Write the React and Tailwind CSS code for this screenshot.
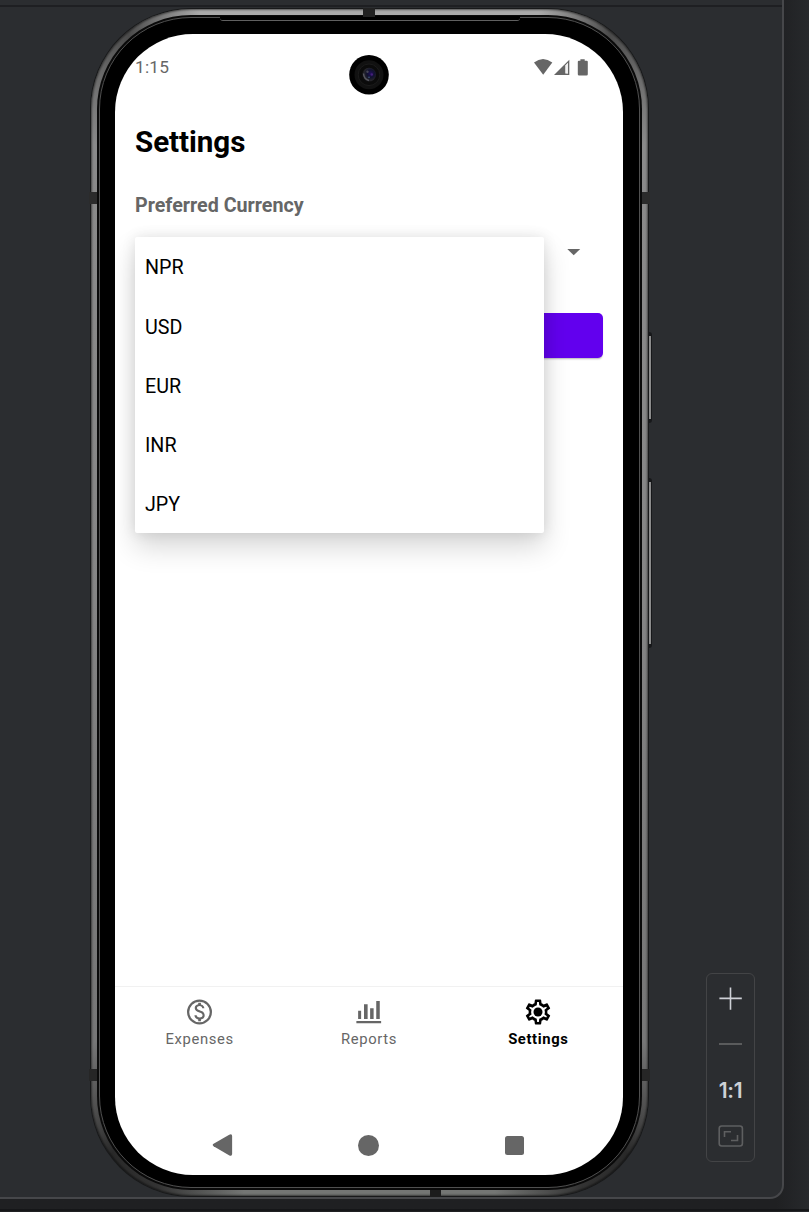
const currencies = ["NPR", "USD", "EUR", "INR", "JPY"];

function StatusIcons() {
  return (
    <svg width="56" height="18" viewBox="534 59 56 18" fill="#666">
      <path d="M534 62.6Q543 55.6 552.3 62.6L543.2 74.7Z" />
      <path d="M569.3 59.8V75H554Z" />
      <path d="M565.3 65.5L568 62.8V73.5H565.3Z" fill="#fff" />
      <path d="M566.5 64.3h1.2v9.2h-1.2z" fill="#e4e4e4" />
      <path d="M580.4 59.2h4.3v1.5h2q1.1 0 1.1 1.1v12.4q0 1.3-1.3 1.3h-7.4q-1.3 0-1.3-1.3v-12.4q0-1.1 1.1-1.1h1.5z" />
    </svg>
  );
}

function Camera() {
  return (
    <svg width="40" height="40" viewBox="0 0 40 40">
      <defs>
        <radialGradient id="lens" cx="0.62" cy="0.42" r="0.6">
          <stop offset="0" stopColor="#21105c" />
          <stop offset="0.45" stopColor="#11122e" />
          <stop offset="0.8" stopColor="#26262b" />
          <stop offset="1" stopColor="#101012" />
        </radialGradient>
      </defs>
      <circle cx="20" cy="19.8" r="19.8" fill="#000" />
      <circle cx="20" cy="19.8" r="14.5" fill="#111" />
      <circle cx="20" cy="19.8" r="10.8" fill="#0b0b0b" stroke="#1b1b1b" />
      <circle cx="20" cy="19.8" r="7" fill="url(#lens)" />
      <path d="M14.5 18.5Q15 24.5 20 25.5" fill="none" stroke="#56565e" strokeWidth="1.5" />
      <circle cx="18.5" cy="16.8" r="1.2" fill="#454555" />
      <circle cx="22.8" cy="19.5" r="1.2" fill="#46207c" />
      <circle cx="20" cy="22.3" r="0.8" fill="#3f5d83" />
    </svg>
  );
}

function Tab({ label, active, children }) {
  return (
    <div className={"flex flex-1 flex-col items-center pt-[10px] " + (active ? "font-bold text-black" : "text-[#666]")}>
      <svg width="30" height="30" viewBox="0 0 24 24" fill="currentColor">
        {children}
      </svg>
      <span className="mt-[2px] text-[14.8px] leading-[20px] tracking-[0.62px]">{label}</span>
    </div>
  );
}

function Phone() {
  return (
    <div className="relative ml-[90px] mt-px h-[1189px] w-[559px] shrink-0">
      <div className="absolute left-[556px] top-[324px] h-[91px] w-[6px] rounded-r-[3px] border-y-[4px] border-r border-[#17181a] bg-[#8c8c8c]" />
      <div className="absolute left-[556px] top-[470px] h-[170px] w-[6px] rounded-r-[3px] border-y-[4px] border-r border-[#17181a] bg-[#8c8c8c]" />
      <div className="relative h-full rounded-[101px] bg-[#18191a] p-px">
        <div className="h-full rounded-[100px] bg-[conic-gradient(#aaa_0deg,#aaa_16deg,#4b4b4b_23deg,#8a8a8a_31deg,#858585_90deg,#777_148deg,#292929_155deg,#333_160deg,#747674_168deg,#747674_192deg,#333_200deg,#292929_205deg,#777_212deg,#858585_270deg,#8a8a8a_329deg,#4b4b4b_337deg,#aaa_344deg)] p-[6px] shadow-[inset_0_0_2px_1px_rgba(0,0,0,0.5)]">
          <div className="h-full rounded-[94px] bg-[#0a0a0a] p-[2px]">
            <div className="h-full rounded-[92px] border border-[#505050] bg-black px-[15px] pb-[12px] pt-[16px]">
              <Screen />
            </div>
          </div>
        </div>
        <div className="absolute left-[130px] top-[8px] h-[5px] w-[300px] rounded-b-[3px] border-b border-[#606060] bg-black" />
        <div className="absolute left-[273px] top-0 h-[9px] w-[12px] bg-[#222]" />
        <div className="absolute left-[340px] bottom-0 h-[7px] w-[11px] bg-[#1c1c1c]" />
        <div className="absolute -left-px top-[184px] h-[12px] w-[8px] bg-[#2b2b2b]" />
        <div className="absolute -right-px top-[184px] h-[12px] w-[8px] bg-[#2b2b2b]" />
        <div className="absolute -left-px top-[1061px] h-[12px] w-[8px] bg-[#262626]" />
        <div className="absolute -right-px top-[1061px] h-[12px] w-[8px] bg-[#262626]" />
      </div>
    </div>
  );
}

function Screen() {
  return (
    <div className="relative flex h-[1141px] w-[508px] flex-col overflow-hidden rounded-[78px] bg-white">
      <header className="flex h-[66px] items-center justify-between pl-[20px] pr-[33px] pt-[2px]">
        <span className="text-[17.3px] tracking-[0.2px] text-[#666]">1:15</span>
        <StatusIcons />
      </header>
      <div className="absolute left-[234px] top-[21px]">
        <Camera />
      </div>
      <main className="flex-1 px-[20px] pt-[22px]">
        <h1 className="text-[29.6px] font-bold leading-[40px] tracking-[-0.05px] text-black">Settings</h1>
        <h2 className="mt-[29px] text-[19.7px] font-bold leading-[30px] text-[#666]">Preferred Currency</h2>
        <div className="relative mt-[7px] h-[52px]">
          <svg className="ml-[432px] pt-[20px]" width="14" height="28" viewBox="0 0 14 7" fill="#666">
            <path d="M0.3 0.5H13.2L6.7 6.8Z" />
          </svg>
          <ul className="absolute left-0 top-[9px] z-10 w-[409px] rounded-[2px] bg-white pt-[0.5px] shadow-[0_14px_28px_rgba(0,0,0,0.16),0_0_14px_rgba(0,0,0,0.1)]">
            {currencies.map((code) => (
              <li key={code} className="flex h-[59.2px] items-center pl-[10px] pt-[2px] text-[19.7px] text-black">
                {code}
              </li>
            ))}
          </ul>
        </div>
        <button className="ml-px mt-[33px] block h-[45px] w-[467px] rounded-[5px] bg-[#6200ee] shadow-[0_2px_2px_-1px_rgba(0,0,0,0.3)]" aria-label="Save" />
      </main>
      <nav className="flex h-[131px] border-t border-[#f1f1f1]">
        <Tab label="Expenses">
          <circle cx="11.6" cy="12" r="9.1" fill="none" stroke="currentColor" strokeWidth="1.8" />
          <path transform="translate(-2.8 -2.4) scale(1.2)" d="M12.9 11.15c-1.8-.6-2.6-.95-2.6-1.75 0-.85.75-1.35 1.8-1.35 1.2 0 1.6.65 1.7 1.4h1.45c-.1-1.1-.75-2.1-2.3-2.5V5.8h-1.8v1.1c-1.3.3-2.35 1.15-2.35 2.5 0 1.6 1.3 2.3 3.1 2.9 1.65.55 2.15 1.05 2.15 1.9 0 .75-.5 1.45-1.9 1.45-1.35 0-1.9-.65-2-1.5H8.6c.1 1.6 1.15 2.5 2.55 2.8v1.2h1.8v-1.15c1.4-.25 2.5-1.1 2.5-2.75 0-2.1-1.55-2.75-2.55-3.1z" />
        </Tab>
        <Tab label="Reports">
          <path d="M1.9 19.1h19.8v1.9H1.9zM3.3 11h2.4v6.6H3.3zM8 5.7h2.9v11.9H8zM12.9 8.9h2.8v8.7h-2.8zM17.8 3.1h2.8v14.5h-2.8z" />
        </Tab>
        <Tab label="Settings" active>
          <path d="M19.43 12.98c.04-.32.07-.64.07-.98s-.03-.66-.07-.98l2.11-1.65c.19-.15.24-.42.12-.64l-2-3.46c-.12-.22-.39-.3-.61-.22l-2.49 1c-.52-.4-1.08-.73-1.69-.98l-.38-2.65C14.46 2.18 14.25 2 14 2h-4c-.25 0-.46.18-.49.42l-.38 2.65c-.61.25-1.17.59-1.69.98l-2.49-1c-.23-.09-.49 0-.61.22l-2 3.46c-.13.22-.07.49.12.64l2.11 1.65c-.04.32-.07.65-.07.98s.03.66.07.98l-2.11 1.65c-.19.15-.24.42-.12.64l2 3.46c.12.22.39.3.61.22l2.49-1c.52.4 1.08.73 1.69.98l.38 2.65c.03.24.24.42.49.42h4c.25 0 .46-.18.49-.42l.38-2.65c.61-.25 1.17-.59 1.69-.98l2.49 1c.23.09.49 0 .61-.22l2-3.46c.12-.22.07-.49-.12-.64l-2.11-1.65z" />
          <path d="M17.4 12.7q.2-.7 0-1.4l-.2-1.2 1.9-1.5-.5-.9-2.3.9-1-.8q-.7-.5-1.4-.8l-.9-.4L12.7 4h-1.4l-.3 2.6-.9.4q-.7.3-1.4.8l-1 .8-2.3-.9-.5.9 1.9 1.5-.2 1.2q-.2.7 0 1.4l.2 1.2-1.9 1.5.5.9 2.3-.9 1 .8q.7.5 1.4.8l.9.4.3 2.6h1.4l.3-2.6.9-.4q.7-.3 1.4-.8l1-.8 2.3.9.5-.9-1.9-1.5z" fill="#fff" />
          <circle cx="12" cy="12" r="3.6" />
        </Tab>
      </nav>
      <footer className="flex h-[58px] items-start pl-[97px]">
        <svg width="22" height="22" viewBox="0 0 22 22" fill="#666" className="mt-[17px]">
          <path d="M17.2.8Q20.1-.6 20.1 2V20Q20.1 22.6 17.4 21.4L1.6 12.2Q-.2 11 1.6 9.8Z" />
        </svg>
        <div className="ml-[124px] mt-[18px] h-[21px] w-[21px] rounded-full bg-[#666]" />
        <div className="ml-[126px] mt-[19px] h-[19px] w-[19px] rounded-[2.5px] bg-[#666]" />
      </footer>
    </div>
  );
}

function ZoomControls() {
  return (
    <aside className="mb-[35px] mr-[27px] flex h-[189px] w-[49px] flex-col items-center self-end rounded-[6px] border border-[#434446]">
      <svg className="mt-[13px]" width="24" height="24" viewBox="0 0 24 24" stroke="#ced0d6" strokeWidth="1.6">
        <path d="M.4 11.4H22.8M11.5.4V22.8" />
      </svg>
      <div className="mt-[32px] h-[2px] w-[23px] bg-[#5a5b5c]" />
      <span className="mt-[34px] font-['Inter',sans-serif] text-[21px] font-semibold leading-[24px] tracking-[-0.3px] text-[#ced0d6]">1:1</span>
      <svg className="mt-[22px]" width="26" height="22" viewBox="0 0 26 22" fill="none" stroke="#5e5f60" strokeWidth="1.6">
        <rect x="1.2" y="1" width="23.2" height="20" rx="2.5" />
        <path d="M6.5 12V6.7H13M19.5 10v5.5H13" />
      </svg>
    </aside>
  );
}

export default function App() {
  return (
    <div className="h-[1212px] w-[809px] overflow-hidden bg-linear-to-r from-[#1f2022] from-96% to-[#27292c] font-['Roboto',sans-serif]">
      <div className="h-[1199px] w-[784px] rounded-br-[14px] border-b-2 border-r-2 border-[#46474a] bg-[#2b2d30]">
        <div className="h-[7px] border-b-2 border-[#1e1f22]" />
        <div className="flex h-[1190px] justify-between">
          <Phone />
          <ZoomControls />
        </div>
      </div>
      <div className="mt-[10px] h-[2px] bg-[#151618]" />
    </div>
  );
}
